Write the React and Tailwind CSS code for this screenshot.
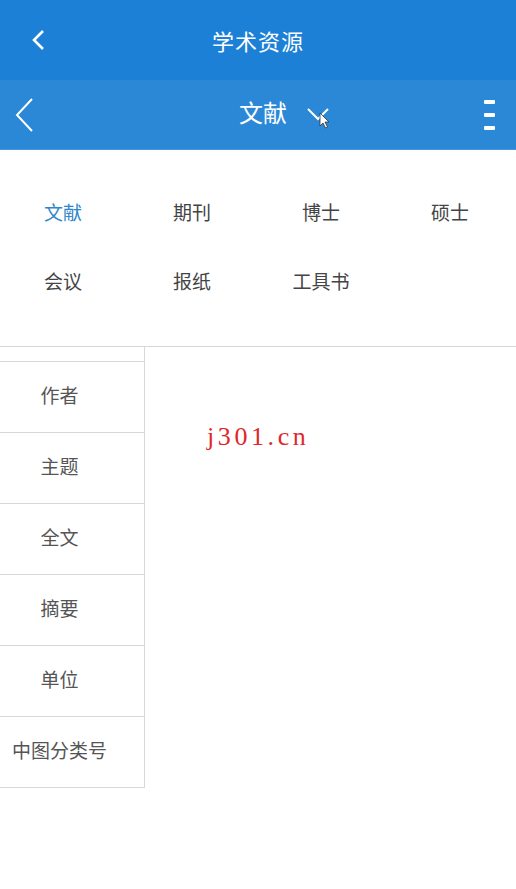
import React from 'react';

const tabs = [
  ['文献', '期刊', '博士', '硕士'],
  ['会议', '报纸', '工具书'],
];

const fields = ['作者', '主题', '全文', '摘要', '单位', '中图分类号'];

const font = { fontFamily: '"Noto Sans CJK SC", "Noto Sans", sans-serif' };

export default function App() {
  return (
    <div className="w-[516px] h-[889px] bg-white overflow-hidden" style={font}>
      {/* 顶部标题栏 */}
      <div className="relative h-[80px] bg-[#1c80d6] flex items-center justify-center">
        <svg className="absolute left-[30px] top-[29px]" width="16" height="22" viewBox="0 0 16 22">
          <path d="M13 2 L4 11 L13 20" fill="none" stroke="#fff" strokeWidth="2.6" />
        </svg>
        <span className="text-white text-[22px] tracking-[1px]">学术资源</span>
      </div>

      {/* 二级栏 */}
      <div className="relative h-[70px] bg-[#2a88d7] border-b border-[#3f97e0] flex items-center justify-center">
        <svg className="absolute left-[13px] top-[17px]" width="22" height="36" viewBox="0 0 22 36">
          <path d="M19 2 L4 18 L19 34" fill="none" stroke="#fff" strokeWidth="2" />
        </svg>
        <span className="text-white text-[24px] ml-[58px] mb-[5px]">文献</span>
        <svg className="ml-[20px] mt-[8px]" width="28" height="24" viewBox="0 0 28 24">
          <path d="M1 2 L11 12 L21 2" fill="none" stroke="#fff" strokeWidth="2" />
          <path d="M13 6 L13 19 L16 16 L18.5 21 L20.5 20 L18 15 L22 15 Z" fill="#fff" stroke="#333" strokeWidth="0.8" />
        </svg>
        <div className="absolute right-[21px] top-[20px] flex flex-col gap-[9px]">
          <div className="w-[11px] h-[4px] bg-white rounded-[1px]" />
          <div className="w-[11px] h-[4px] bg-white rounded-[1px]" />
          <div className="w-[11px] h-[4px] bg-white rounded-[1px]" />
        </div>
      </div>

      {/* 分类标签 */}
      <div className="h-[197px] border-b border-[#d8d8d8] pt-[44px]">
        {tabs.map((row, i) => (
          <div key={i} className="grid grid-cols-4 h-[69px]">
            {row.map((t, j) => (
              <div
                key={t}
                className={`flex justify-center pt-[4px] pr-[3px] text-[19px] ${
                  i === 0 && j === 0 ? 'text-[#2e86cc]' : 'text-[#444]'
                }`}
              >
                {t}
              </div>
            ))}
          </div>
        ))}
      </div>

      {/* 检索字段 + 内容 */}
      <div className="flex">
        <div className="w-[145px] border-r border-[#d8d8d8]">
          <div className="h-[15px] border-b border-[#d8d8d8]" />
          {fields.map((f) => (
            <div
              key={f}
              className="h-[71px] border-b border-[#d8d8d8] flex items-center justify-center pr-[25px] pb-[3px] text-[19px] text-[#555]"
            >
              {f}
            </div>
          ))}
        </div>
        <div className="flex-1 pl-[62px] pt-[70px]">
          <span
            className="text-[#e0262c] text-[26px] tracking-[3.6px]"
            style={{ fontFamily: '"Liberation Serif", serif' }}
          >
            j301.cn
          </span>
        </div>
      </div>
    </div>
  );
}
